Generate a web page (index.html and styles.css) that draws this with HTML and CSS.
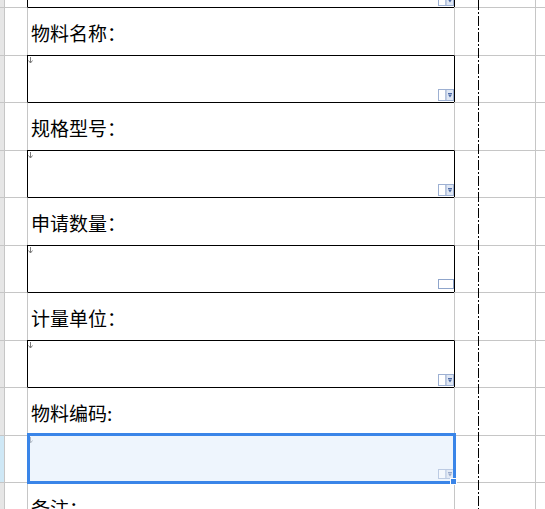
FILE: index.html
```html
<!DOCTYPE html>
<html lang="zh">
<head>
<meta charset="utf-8">
<link rel="stylesheet" href="styles.css">
</head>
<body>
<div class="sheet">
  <div class="row r-top inp">
    <div class="hd"></div><div class="a"></div>
    <div class="b"><span class="dd"><svg width="16" height="12" viewBox="0 0 16 12"><rect x="0.5" y="0.5" width="7.5" height="11" fill="#fff" stroke="#9db0d2"/><rect x="8" y="0.5" width="7.5" height="11" fill="#dfe7f4" stroke="#9db0d2"/><path d="M10 4h4v1h-4z M10 5.5h4l-2 3z" fill="#4d6aa6"/></svg></span></div>
    <div class="c"></div><div class="d"></div>
  </div>

  <div class="row lab">
    <div class="hd"></div><div class="a"></div>
    <div class="b"><span class="txt">物料名称：</span></div>
    <div class="c"></div><div class="d"></div>
  </div>
  <div class="row inp">
    <div class="hd"></div><div class="a"></div>
    <div class="b">
      <span class="mark"><svg width="5" height="7" viewBox="0 0 5 7"><path d="M2.5 0v6 M0.5 3.5l2 2.5 2-2.5" fill="none" stroke="#7a7a7a"/></svg></span>
      <span class="dd"><svg width="16" height="12" viewBox="0 0 16 12"><rect x="0.5" y="0.5" width="7.5" height="11" fill="#fff" stroke="#9db0d2"/><rect x="8" y="0.5" width="7.5" height="11" fill="#dfe7f4" stroke="#9db0d2"/><path d="M10 4h4v1h-4z M10 5.5h4l-2 3z" fill="#4d6aa6"/></svg></span>
    </div>
    <div class="c"></div><div class="d"></div>
  </div>

  <div class="row lab">
    <div class="hd"></div><div class="a"></div>
    <div class="b"><span class="txt">规格型号：</span></div>
    <div class="c"></div><div class="d"></div>
  </div>
  <div class="row inp">
    <div class="hd"></div><div class="a"></div>
    <div class="b">
      <span class="mark"><svg width="5" height="7" viewBox="0 0 5 7"><path d="M2.5 0v6 M0.5 3.5l2 2.5 2-2.5" fill="none" stroke="#7a7a7a"/></svg></span>
      <span class="dd"><svg width="16" height="12" viewBox="0 0 16 12"><rect x="0.5" y="0.5" width="7.5" height="11" fill="#fff" stroke="#9db0d2"/><rect x="8" y="0.5" width="7.5" height="11" fill="#dfe7f4" stroke="#9db0d2"/><path d="M10 4h4v1h-4z M10 5.5h4l-2 3z" fill="#4d6aa6"/></svg></span>
    </div>
    <div class="c"></div><div class="d"></div>
  </div>

  <div class="row lab">
    <div class="hd"></div><div class="a"></div>
    <div class="b"><span class="txt">申请数量：</span></div>
    <div class="c"></div><div class="d"></div>
  </div>
  <div class="row inp">
    <div class="hd"></div><div class="a"></div>
    <div class="b">
      <span class="mark"><svg width="5" height="7" viewBox="0 0 5 7"><path d="M2.5 0v6 M0.5 3.5l2 2.5 2-2.5" fill="none" stroke="#7a7a7a"/></svg></span>
      <span class="box"></span>
    </div>
    <div class="c"></div><div class="d"></div>
  </div>

  <div class="row lab">
    <div class="hd"></div><div class="a"></div>
    <div class="b"><span class="txt">计量单位：</span></div>
    <div class="c"></div><div class="d"></div>
  </div>
  <div class="row inp">
    <div class="hd"></div><div class="a"></div>
    <div class="b">
      <span class="mark"><svg width="5" height="7" viewBox="0 0 5 7"><path d="M2.5 0v6 M0.5 3.5l2 2.5 2-2.5" fill="none" stroke="#7a7a7a"/></svg></span>
      <span class="dd"><svg width="16" height="12" viewBox="0 0 16 12"><rect x="0.5" y="0.5" width="7.5" height="11" fill="#fff" stroke="#9db0d2"/><rect x="8" y="0.5" width="7.5" height="11" fill="#dfe7f4" stroke="#9db0d2"/><path d="M10 4h4v1h-4z M10 5.5h4l-2 3z" fill="#4d6aa6"/></svg></span>
    </div>
    <div class="c"></div><div class="d"></div>
  </div>

  <div class="row lab">
    <div class="hd"></div><div class="a"></div>
    <div class="b"><span class="txt">物料编码:</span></div>
    <div class="c"></div><div class="d"></div>
  </div>
  <div class="row inp sel">
    <div class="hd"></div><div class="a"></div>
    <div class="b">
      <span class="mark"><svg width="5" height="7" viewBox="0 0 5 7"><path d="M2.5 0v6 M0.5 3.5l2 2.5 2-2.5" fill="none" stroke="#b0b8c4"/></svg></span>
      <span class="dd dd-sel"><svg width="16" height="10" viewBox="0 0 16 10"><rect x="0.5" y="0.5" width="7.5" height="9" fill="#f4f8fd" stroke="#bccbe3"/><rect x="8" y="0.5" width="7.5" height="9" fill="#e3eaf5" stroke="#bccbe3"/><path d="M10 3h4v1h-4z M10 4.5h4l-2 3z" fill="#9aaacb"/></svg></span>
      <span class="selbox"><span class="handle"></span></span>
    </div>
    <div class="c"></div><div class="d"></div>
  </div>

  <div class="row lab">
    <div class="hd"></div><div class="a"></div>
    <div class="b"><span class="txt">备注：</span></div>
    <div class="c"></div><div class="d"></div>
  </div>

  <div class="pagebreak"></div>
</div>
</body>
</html>
```

FILE: styles.css
```css
* {
  box-sizing: border-box;
}

html, body {
  margin: 0;
  padding: 0;
  background: #ffffff;
}

body {
  width: 545px;
  height: 509px;
  overflow: hidden;
  font-family: "Noto Sans CJK SC", "Noto Sans", sans-serif;
  color: #000;
}

.sheet {
  position: relative;
  width: 545px;
  height: 509px;
  overflow: hidden;
}

.row {
  display: grid;
  grid-template-columns: 4px 23px 427px 81px 1fr;
}

.row.lab {
  height: 48px;
}

.row.inp {
  height: 47px;
}

.row.r-top {
  height: 7px;
}

.row > div {
  border-top: 1px solid #c6c6c6;
  position: relative;
}

.row.r-top > div {
  border-top: none;
}

.hd {
  background: #e6e6e6;
}

.sel .hd {
  background: #cfe8f6;
}

.a, .b, .c, .d {
  border-left: 1px solid #c6c6c6;
}

.inp .b {
  border-left-color: #000;
  border-top-color: #000;
}

.lab .b {
  border-top-color: #000;
}

.inp .c {
  border-left-color: #000;
}

.sel .b {
  background: #eef5fd;
}

.txt {
  display: block;
  padding: 15px 0 0 3px;
  font-size: 19px;
  line-height: 19px;
  white-space: nowrap;
}

.mark {
  position: absolute;
  top: 1px;
  left: 0;
  display: block;
  line-height: 0;
}

.dd {
  position: absolute;
  right: 0;
  bottom: 1px;
  line-height: 0;
}

.dd-sel {
  bottom: 3px;
}

.box {
  position: absolute;
  right: 0;
  bottom: 3px;
  width: 16px;
  height: 10px;
  border: 1px solid #8fa5cb;
}

.selbox {
  position: absolute;
  z-index: 5;
  left: -1px;
  top: -3px;
  right: -2px;
  bottom: -2px;
  border: 3px solid #3a85e8;
}

.handle {
  position: absolute;
  right: -4px;
  bottom: -4px;
  width: 7px;
  height: 7px;
  background: #3a85e8;
  border: 1px solid #ffffff;
}

.pagebreak {
  position: absolute;
  z-index: 6;
  left: 478px;
  top: 0;
  width: 1px;
  height: 509px;
  background: repeating-linear-gradient(to bottom, #000 0 10px, transparent 10px 12px, #000 12px 14px, transparent 14px 16px);
}
```
